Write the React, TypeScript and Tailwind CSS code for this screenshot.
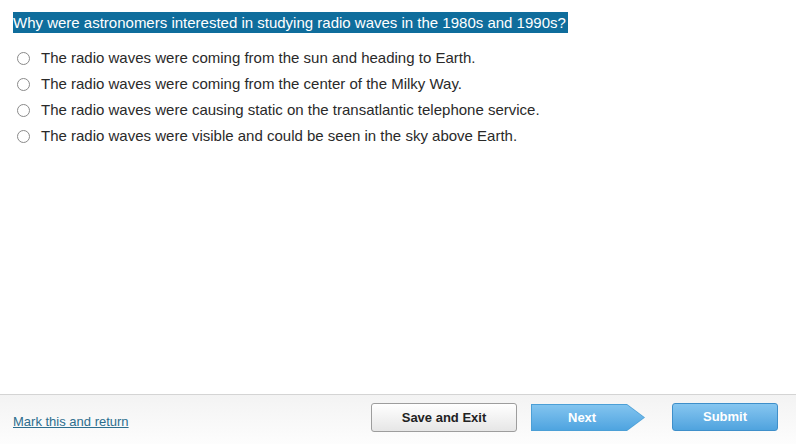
import React from "react";

const options = [
  "The radio waves were coming from the sun and heading to Earth.",
  "The radio waves were coming from the center of the Milky Way.",
  "The radio waves were causing static on the transatlantic telephone service.",
  "The radio waves were visible and could be seen in the sky above Earth.",
];

export default function App() {
  return (
    <div className="w-[796px] h-[444px] bg-white flex flex-col font-['Liberation_Sans',Arial,sans-serif] text-[#222]">
      <div className="flex-1 pt-[11px]">
        <div className="pl-[13px]">
          <span className="inline-block bg-[#0f6d9c] text-white text-[15px] leading-[21px] pr-[2px]">
            Why were astronomers interested in studying radio waves in the 1980s and 1990s?
          </span>
        </div>
        <div className="mt-[10px] flex flex-col">
          {options.map((o) => (
            <label key={o} className="flex items-center h-[26px] pl-[17px]">
              <span className="w-[13px] h-[13px] rounded-full border border-[#8a8a8a] bg-white" />
              <span className="ml-[11px] text-[15px] text-[#2a2a2a]">{o}</span>
            </label>
          ))}
        </div>
      </div>
      <div className="h-[50px] border-t border-[#d4d4d4] bg-gradient-to-b from-[#f3f3f3] to-[#fdfdfd] flex items-start pt-[8px]">
        <a className="ml-[13px] mt-[9px] text-[13px] text-[#2d6e8e] underline">Mark this and return</a>
        <div className="ml-auto flex items-start mr-[18px]">
          <button className="w-[146px] h-[29px] rounded-[3px] border border-[#9d9d9d] bg-gradient-to-b from-[#ffffff] to-[#e6e6e6] text-[13px] font-bold text-[#222]">
            Save and Exit
          </button>
          <div className="ml-[14px] mt-px w-[114px] h-[27px] bg-[#4b9fd6] [clip-path:polygon(0_0,96px_0,114px_50%,96px_100%,0_100%)] p-px">
            <div className="w-full h-full bg-gradient-to-b from-[#82c4ef] to-[#4ea4e0] [clip-path:polygon(0_0,95px_0,112px_50%,95px_100%,0_100%)] flex items-center pl-[36px] text-white text-[13px] font-bold">
              Next
            </div>
          </div>
          <button className="ml-[27px] w-[106px] h-[28px] rounded-[3px] border border-[#3e8fca] bg-gradient-to-b from-[#86c6f0] to-[#4fa3de] text-white text-[13px] font-bold">
            Submit
          </button>
        </div>
      </div>
    </div>
  );
}
